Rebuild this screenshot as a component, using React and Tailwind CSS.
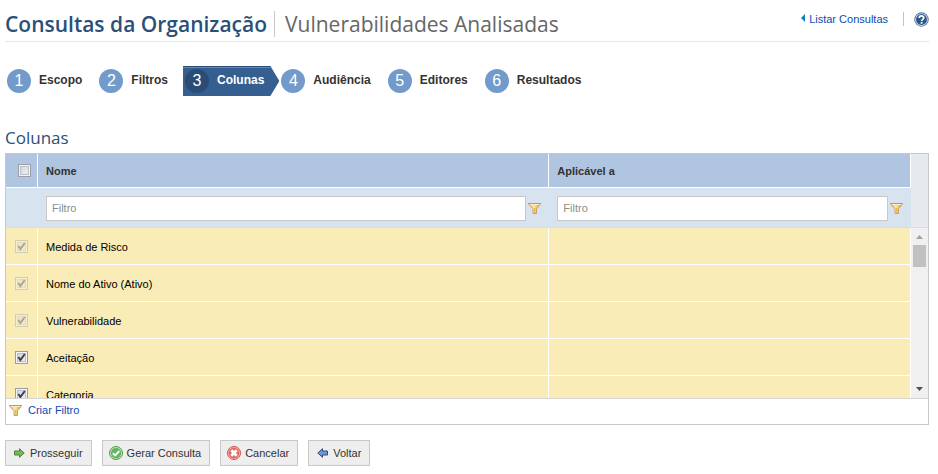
import React, { useState } from 'react';

const COLUMNS = [
    { id: 'risk', name: 'Medida de Risco', required: true },
    { id: 'asset', name: 'Nome do Ativo (Ativo)', required: true },
    { id: 'vulnerability', name: 'Vulnerabilidade', required: true },
    { id: 'acceptance', name: 'Aceitação', required: false },
    { id: 'category', name: 'Categoria', required: false },
];

const STEPS = ['Escopo', 'Filtros', 'Colunas', 'Audiência', 'Editores', 'Resultados'];

const FunnelIcon = () => (
    <svg width="13" height="11" viewBox="0 0 13 11" className="shrink-0" aria-hidden="true">
        <defs>
            <linearGradient id="funnel" x1="0" x2="1">
                <stop offset="0" stopColor="#e9b95c" />
                <stop offset="0.45" stopColor="#fbe9a0" />
                <stop offset="1" stopColor="#dca02e" />
            </linearGradient>
        </defs>
        <path d="M.8 1.5H12.2L8.5 5.8V10.5H5V5.8Z" fill="url(#funnel)" stroke="#c9a06a" />
        <path d="M1.5 1.5H11.5" stroke="#fbeccb" />
        <path d="M0 .5H13" stroke="#cf9445" />
        <path d="M6.8 5V10" stroke="#e0ae2c" />
    </svg>
);

const HelpIcon = () => (
    <svg width="15" height="15" viewBox="0 0 16 16" aria-hidden="true">
        <circle cx="8" cy="8" r="7.7" fill="#4b7099" />
        <circle cx="8" cy="8" r="6.8" fill="#c9d8e8" />
        <circle cx="8" cy="8" r="5.8" fill="#2c568a" />
        <path d="M5.6 6.5C5.6 3.4 10.5 3.5 10.4 6.4C10.3 8 8.1 7.8 8.1 9.7" fill="none" stroke="#fff" strokeWidth="1.9" />
        <path d="M8.1 10.6V12.5" stroke="#fff" strokeWidth="2" />
    </svg>
);

const ArrowIcon = ({ back }) => (
    <svg width="11" height="10" viewBox="0 0 11 10" className="shrink-0" aria-hidden="true">
        {back ? (
            <path d="M10.5 3H5.5V.7L.8 5L5.5 9.3V7H10.5Z" fill="#7593cd" stroke="#2f4d85" />
        ) : (
            <path d="M.5 3H5.5V.7L10.2 5L5.5 9.3V7H.5Z" fill="#79b75a" stroke="#4a8638" />
        )}
    </svg>
);

const OkIcon = () => (
    <svg width="14" height="14" viewBox="0 0 14 14" className="shrink-0" aria-hidden="true">
        <circle cx="7" cy="7" r="6.5" fill="#c5e8bd" stroke="#4a9e48" />
        <circle cx="7" cy="7" r="5.2" fill="#62b55c" />
        <path d="M3.8 7.2L6.2 9.4L10.3 5" fill="none" stroke="#fff" strokeWidth="2" />
    </svg>
);

const CancelIcon = () => (
    <svg width="14" height="14" viewBox="0 0 14 14" className="shrink-0" aria-hidden="true">
        <circle cx="7" cy="7" r="6.5" fill="#f6c4be" stroke="#cf5049" />
        <circle cx="7" cy="7" r="5.4" fill="#e4675f" />
        <path d="M4.3 4.3L9.7 9.7M9.7 4.3L4.3 9.7" stroke="#fff" strokeWidth="2.8" />
    </svg>
);

const Checkbox = ({ label, checked, disabled, onChange }) => (
    <span className={`grid w-[13px] h-[13px] ${disabled ? 'opacity-40' : ''}`}>
        <input
            type="checkbox"
            aria-label={label}
            checked={checked}
            disabled={disabled}
            onChange={onChange}
            className="appearance-none col-start-1 row-start-1 w-[13px] h-[13px] border border-[#9a9fa5] bg-linear-to-br from-[#cdd1d8] to-[#f3f3f3] shadow-[inset_0_0_0_1px_#f4f4f4,inset_0_0_0_2px_#bcc0c6]"
        />
        {checked && (
            <svg viewBox="0 0 13 13" className="col-start-1 row-start-1 w-[13px] h-[13px] pointer-events-none" aria-hidden="true">
                <path d="M3.4 6L5.4 9L9.8 3" fill="none" stroke="#3a3d48" strokeWidth="1.9" />
            </svg>
        )}
    </span>
);

const ColGroup = () => (
    <colgroup>
        <col className="w-8" />
        <col className="w-[56.5%]" />
        <col />
    </colgroup>
);

const FilterField = ({ label, value, onChange }) => (
    <div className="flex items-center gap-[2px] pl-2 pr-2 pt-px">
        <input
            type="text"
            aria-label={label}
            placeholder="Filtro"
            value={value}
            onChange={onChange}
            className="min-w-0 flex-1 h-[25px] px-[5px] bg-white border border-[#c8c8c8] placeholder:text-[#8c8c8c] outline-none"
        />
        <button type="button" aria-label={`Opções de filtro: ${label}`}>
            <FunnelIcon />
        </button>
    </div>
);

const ActionButton = ({ icon, children }) => (
    <button
        type="button"
        className="flex items-center gap-1 h-[26px] pl-1.5 pr-2 bg-[#eeeeee] border border-[#c8c8c8] text-[#333333] hover:bg-gray-200"
    >
        <span className="flex w-3.5 justify-center">{icon}</span>
        {children}
    </button>
);

const WizardSteps = ({ current }) => (
    <ol className="flex mt-6 text-xs font-bold">
        {STEPS.map((step, idx) => {
            const active = idx === current;
            return (
                <li
                    key={step}
                    aria-current={active ? 'step' : undefined}
                    className={`flex items-center gap-2 h-[30px] pl-[2px] pr-[15px] ${
                        active
                            ? 'bg-[#365f91] text-white shadow-[inset_0_1px_0_#2c4f7c,inset_0_2px_0_#5f86b5] [clip-path:polygon(0_0,calc(100%-9px)_0,100%_50%,calc(100%-9px)_100%,0_100%)]'
                            : 'text-[#333333]'
                    }`}
                >
                    <span
                        className={`flex items-center justify-center w-6 h-6 rounded-full text-base font-normal text-white ${
                            active ? 'bg-[#2b4c75]' : 'bg-[#729bcb]'
                        }`}
                    >
                        {idx + 1}
                    </span>
                    <span className="pb-[2px]">{step}</span>
                </li>
            );
        })}
    </ol>
);

const App = () => {
    const [selected, setSelected] = useState(COLUMNS.map((column) => column.id));
    const [filters, setFilters] = useState({ name: '', target: '' });

    const toggle = (id) => {
        setSelected(selected.includes(id) ? selected.filter((item) => item !== id) : [...selected, id]);
    };

    const rows = COLUMNS.filter((column) => column.name.toLowerCase().includes(filters.name.toLowerCase()));

    return (
        <main className="pl-[5px] pr-[9px] pt-[11px] bg-white font-['Liberation_Sans',Arial,sans-serif] text-[11px] leading-4 text-black">
            <header className="flex items-start justify-between border-b border-[#e3e8ef]">
                <h1 className="flex items-center pb-1 font-['Trebuchet_MS','Open_Sans',sans-serif] text-[21px] leading-[26px] whitespace-nowrap">
                    <span className="pr-[7px] border-r border-[#c8c8c8] font-semibold text-[#2b5078]">Consultas da Organização</span>
                    <span className="pl-2.5 text-[#666666]">Vulnerabilidades Analisadas</span>
                </h1>
                <nav className="flex items-center whitespace-nowrap">
                    <a href="#consultas" className="flex items-center gap-1 pr-[15px] text-[#0b4bb5] hover:underline">
                        <svg width="4" height="8" viewBox="0 0 4 8" className="mb-[3px]" aria-hidden="true">
                            <path d="M4 0V8L0 4Z" fill="#0683c1" />
                        </svg>
                        Listar Consultas
                    </a>
                    <button type="button" aria-label="Ajuda" className="h-3.5 pl-2.5 border-l border-[#b8c4d4] flex items-center">
                        <HelpIcon />
                    </button>
                </nav>
            </header>

            <WizardSteps current={2} />

            <section className="mt-[31px]">
                <h2 className="pb-1 font-['Trebuchet_MS','Open_Sans',sans-serif] text-[17px] leading-[22px] text-[#2b5078]">Colunas</h2>

                <div className="border border-[#c8c8c8]">
                    <div className="flex bg-[#e6eaef] border-b border-[#dcdcdc]">
                        <table className="flex-1 table-fixed border-separate border-spacing-0 text-left">
                            <ColGroup />
                            <thead>
                                <tr className="h-[34px] bg-[#b0c5e0] text-[#333333]">
                                    <th className="pl-3 border-r border-b border-white">
                                        <Checkbox label="Selecionar todas" checked={false} onChange={() => setSelected(COLUMNS.map((column) => column.id))} />
                                    </th>
                                    <th className="pl-2 border-r border-b border-white">Nome</th>
                                    <th className="pl-2 border-r border-b border-white">Aplicável a</th>
                                </tr>
                                <tr className="h-[39px] bg-[#d7e3ee]">
                                    <td />
                                    <td>
                                        <FilterField
                                            label="Nome"
                                            value={filters.name}
                                            onChange={(e) => setFilters({ ...filters, name: e.target.value })}
                                        />
                                    </td>
                                    <td>
                                        <FilterField
                                            label="Aplicável a"
                                            value={filters.target}
                                            onChange={(e) => setFilters({ ...filters, target: e.target.value })}
                                        />
                                    </td>
                                </tr>
                            </thead>
                        </table>
                        <div className="w-[17px] shrink-0" />
                    </div>

                    <div className="flex h-[171px] overflow-hidden border-b border-[#d5d5d5]">
                        <div className="flex-1">
                            <table className="w-full table-fixed border-separate border-spacing-0">
                                <ColGroup />
                                <tbody>
                                    {rows.map((column) => (
                                        <tr key={column.id} className="h-[37px] bg-[#faecb6]">
                                            <td className="pl-[9px] border-r border-b border-white">
                                                <Checkbox
                                                    label={column.name}
                                                    checked={selected.includes(column.id)}
                                                    disabled={column.required}
                                                    onChange={() => toggle(column.id)}
                                                />
                                            </td>
                                            <td className="pl-2 pt-[2px] border-r border-b border-white">{column.name}</td>
                                            <td className="border-r border-b border-white" />
                                        </tr>
                                    ))}
                                </tbody>
                            </table>
                        </div>
                        <div className="flex flex-col items-center w-[17px] shrink-0 py-[7px] bg-[#f0f0f0]">
                            <svg width="7" height="4" viewBox="0 0 7 4" aria-hidden="true">
                                <path d="M0 4L3.5 0L7 4Z" fill="#a3a3a3" />
                            </svg>
                            <div className="mt-1.5 w-[13px] h-[22px] bg-[#c1c1c1]" />
                            <svg width="7" height="4" viewBox="0 0 7 4" className="mt-auto" aria-hidden="true">
                                <path d="M0 0L3.5 4L7 0Z" fill="#505050" />
                            </svg>
                        </div>
                    </div>

                    <div className="flex h-[25px] pb-[3px]">
                        <a href="#filtro" className="flex items-center gap-1.5 pl-[3px] text-[#0b4bb5] hover:underline">
                            <FunnelIcon />
                            Criar Filtro
                        </a>
                    </div>
                </div>
            </section>

            <div className="flex gap-2.5 mt-[15px]">
                <ActionButton icon={<ArrowIcon />}>Prosseguir</ActionButton>
                <ActionButton icon={<OkIcon />}>Gerar Consulta</ActionButton>
                <ActionButton icon={<CancelIcon />}>Cancelar</ActionButton>
                <ActionButton icon={<ArrowIcon back />}>Voltar</ActionButton>
            </div>
        </main>
    );
};

export default App;
